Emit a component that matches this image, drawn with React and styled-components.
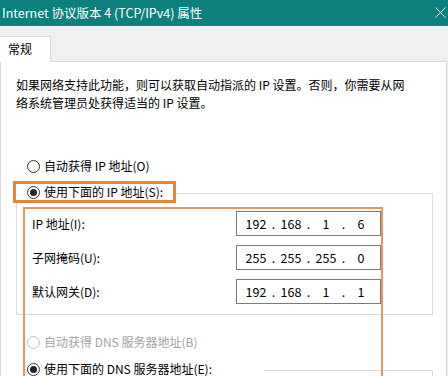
import React from "react";
import styled, { createGlobalStyle } from "styled-components";

const GlobalStyle = createGlobalStyle`
  html, body { margin: 0; padding: 0; overflow: hidden; }
  body {
    background: #f0f0f0;
    font-family: "Noto Sans CJK SC", "Microsoft YaHei", sans-serif;
    font-size: 12px;
    color: #000;
  }
`;

const Window = styled.div`
  width: 448px;
  height: 376px;
  display: flex;
  flex-direction: column;
  background: #f0f0f0;
  overflow: hidden;
`;

const TitleBar = styled.div`
  height: 26px;
  flex: none;
  box-sizing: border-box;
  background: #0b807f;
  color: #fff;
  display: flex;
  align-items: center;
  justify-content: space-between;
  padding: 0 2px 2px 2px;
  font-size: 12.5px;
`;

const TabStrip = styled.div`
  height: 35px;
  flex: none;
  display: flex;
  align-items: flex-end;
`;

const Tab = styled.div`
  width: 51px;
  height: 26px;
  box-sizing: border-box;
  margin-bottom: -1px;
  padding: 0 0 2px 8px;
  background: #fff;
  border: 1px solid #d9d9d9;
  border-left: none;
  border-bottom: none;
  display: flex;
  align-items: center;
  position: relative;
  z-index: 1;
`;

const Panel = styled.div`
  flex: 1;
  width: 447px;
  box-sizing: border-box;
  background: #fff;
  border: 1px solid #d9d9d9;
  border-bottom: none;
  padding-top: 14px;
  display: flex;
  flex-direction: column;
  position: relative;
`;

const Intro = styled.p`
  margin: 0 0 45px 15px;
  line-height: 18px;
`;

const RadioRow = styled.label`
  display: flex;
  align-items: center;
  gap: 4px;
  height: 18px;
  line-height: 16px;
  margin-left: 26px;
  margin-top: ${(p) => p.$gap || "0"};
  color: ${(p) => (p.$disabled ? "#a3a3a3" : "#000")};
`;

const Radio = styled.span`
  width: 13px;
  height: 13px;
  box-sizing: border-box;
  border-radius: 50%;
  border: 1px solid ${(p) => (p.$disabled ? "#c4c4c4" : "#333")};
  display: flex;
  align-items: center;
  justify-content: center;
  flex: none;
  &::after {
    content: "";
    width: 7px;
    height: 7px;
    border-radius: 50%;
    background: #222;
    display: ${(p) => (p.$checked ? "block" : "none")};
  }
`;

const GroupHeader = styled.div`
  align-self: flex-start;
  position: relative;
  z-index: 1;
  background: #fff;
  margin: ${(p) => p.$margin};
  padding: ${(p) => p.$padding};
  border: ${(p) => (p.$marked ? "3px solid #e7843c" : "none")};
  display: flex;
  align-items: center;
  gap: 4px;
  height: ${(p) => (p.$marked ? "16px" : "18px")};
  line-height: 16px;
`;

const GroupBox = styled.div`
  width: 417px;
  box-sizing: border-box;
  margin: ${(p) => p.$margin};
  border: 1px solid #dcdcdc;
  padding: 17px 0 10px 15px;
  display: flex;
  flex-direction: column;
  gap: 9px;
  min-height: ${(p) => p.$minHeight || "0"};
`;

const FieldRow = styled.div`
  display: flex;
  align-items: center;
  height: 25px;
`;

const FieldLabel = styled.span`
  width: 204px;
`;

const IpInput = styled.div`
  width: 145px;
  height: 25px;
  box-sizing: border-box;
  border: 1px solid #7a7a7a;
  padding-left: 5px;
  display: flex;
  align-items: center;
  font-size: 12.5px;
`;

const Octet = styled.span`
  width: 28px;
  text-align: center;
`;

const Dot = styled.span`
  width: 7px;
  text-align: center;
`;

const Highlight = styled.div`
  position: absolute;
  left: 22px;
  top: 145px;
  width: 360px;
  height: 220px;
  box-sizing: border-box;
  border: 2px solid #eb965a;
  pointer-events: none;
  z-index: 2;
`;

const CloseIcon = () => (
  <svg width="11" height="11" viewBox="0 0 11 11">
    <path d="M0.5 0.5 L10.5 10.5 M10.5 0.5 L0.5 10.5" stroke="#fff" strokeWidth="1" />
  </svg>
);

const IpField = ({ label, value }) => {
  const parts = value.split(".");
  return (
    <FieldRow>
      <FieldLabel>{label}</FieldLabel>
      <IpInput>
        {parts.map((p, i) => (
          <React.Fragment key={i}>
            <Octet>{p}</Octet>
            {i < 3 && <Dot>.</Dot>}
          </React.Fragment>
        ))}
      </IpInput>
    </FieldRow>
  );
};

const App = () => {
  return (
    <Window>
      <GlobalStyle />
      <TitleBar>
        <span>Internet 协议版本 4 (TCP/IPv4) 属性</span>
        <CloseIcon />
      </TitleBar>
      <TabStrip>
        <Tab>常规</Tab>
      </TabStrip>
      <Panel>
        <Intro>
          如果网络支持此功能，则可以获取自动指派的 IP 设置。否则，你需要从网
          <br />
          络系统管理员处获得适当的 IP 设置。
        </Intro>
        <RadioRow>
          <Radio />
          自动获得 IP 地址(O)
        </RadioRow>
        <GroupHeader $marked $margin="6px 0 0 12px" $padding="0 10px 0 11px">
          <Radio $checked />
          使用下面的 IP 地址(S):
        </GroupHeader>
        <GroupBox $margin="-10px 0 0 15px">
          <IpField label="IP 地址(I):" value="192.168.1.6" />
          <IpField label="子网掩码(U):" value="255.255.255.0" />
          <IpField label="默认网关(D):" value="192.168.1.1" />
        </GroupBox>
        <RadioRow $disabled $gap="18px">
          <Radio $disabled />
          自动获得 DNS 服务器地址(B)
        </RadioRow>
        <GroupHeader $margin="9px 0 0 15px" $padding="0 52px 0 11px">
          <Radio $checked />
          使用下面的 DNS 服务器地址(E):
        </GroupHeader>
        <GroupBox $margin="-8px 0 0 15px" $minHeight="80px" />
        <Highlight />
      </Panel>
    </Window>
  );
};

export default App;
